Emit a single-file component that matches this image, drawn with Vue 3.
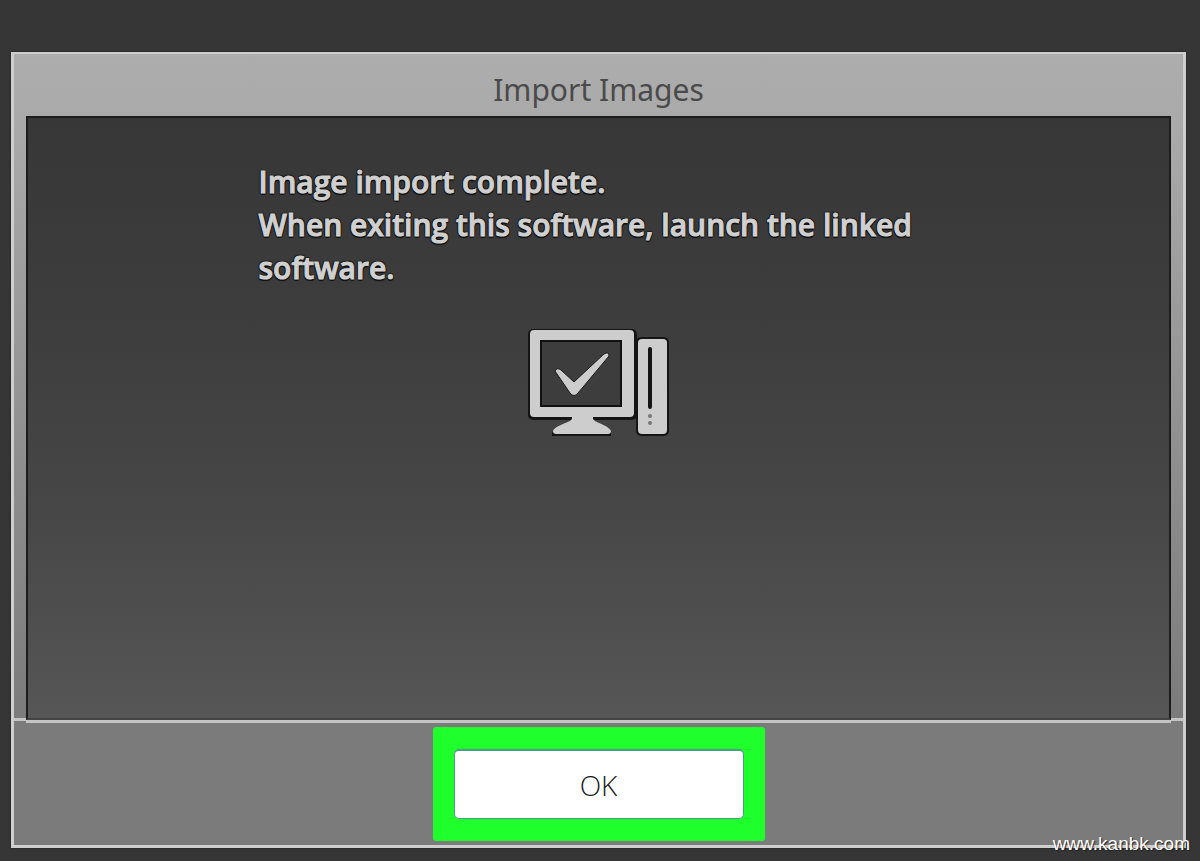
<script setup>
const title = 'Import Images'
const message = [
  'Image import complete.',
  'When exiting this software, launch the linked software.',
]
</script>

<template>
  <div class="screen">
    <section class="dialog" role="dialog" aria-labelledby="dialog-title">
      <header class="titlebar">
        <h1 id="dialog-title">{{ title }}</h1>
      </header>
      <main class="panel">
        <div class="message">
          <p v-for="line in message" :key="line">{{ line }}</p>
        </div>
        <svg class="computer" viewBox="0 0 144 112" width="144" height="112" aria-hidden="true">
          <g class="shade">
            <rect x="1" y="2" width="109" height="91" rx="5" />
            <path d="M44 90v4c-3 5-17 6-19 12v3h59v-3c-2-6-14-7-18-12v-4z" />
            <rect x="109" y="10" width="33" height="99" rx="5" />
          </g>
          <g class="shape">
            <path fill-rule="evenodd" d="M7 3h96q4 0 4 4v79q0 4-4 4H7q-4 0-4-4V7q0-4 4-4zM13 13v67h82V13z" />
            <path d="M45 88v3c0 5-16 6-19 13q0 3 3 3h52q3 0 3-3c-3-7-18-8-18-13v-3z" />
            <rect x="111" y="12" width="29" height="95" rx="4" />
          </g>
          <path class="outline" d="M14 79V14h80v65z" />
          <path class="check" d="M28 44q2-4 6-1l13 12 30-28q5-3 5 2L51 66q-4 5-8 0z" />
          <path class="slot" d="M123 22v58" />
          <circle class="dot" cx="123" cy="89" r="2" />
          <circle class="dot" cx="123" cy="96" r="2" />
        </svg>
      </main>
      <footer class="footer">
        <div class="highlight">
          <button type="button" class="ok">OK</button>
        </div>
      </footer>
    </section>
    <span class="watermark">www.kanbk.com</span>
  </div>
</template>

<style>
body {
  margin: 0;
  background: #363636;
}
</style>

<style scoped>
.screen {
  position: relative;
  display: flex;
  box-sizing: border-box;
  min-height: 100vh;
  padding: 52px 14px 13px 11px;
  background: #363636;
  font-family: "Noto Sans", "Open Sans", sans-serif;
}

.dialog {
  flex: 1;
  display: flex;
  flex-direction: column;
  border: 3px solid #cecece;
  border-top-width: 2px;
  background: linear-gradient(#adadad 0, #a9a9a9 80px, #8f8f8f 400px, #7b7b7b 664px);
  box-shadow: 0 0 2px #1c1c1c;
}

.titlebar {
  display: flex;
  justify-content: center;
  align-items: flex-end;
  height: 62px;
}

h1 {
  margin: 0 0 6px;
  color: #4a4a4a;
  font-size: 30px;
  font-weight: 400;
  line-height: 40px;
}

.panel {
  position: relative;
  flex: 1;
  display: flex;
  flex-direction: column;
  align-items: center;
  gap: 38px;
  margin: 0 12px -2px;
  padding-top: 42px;
  border: 2px solid #1c1c1c;
  border-bottom-color: #444;
  background: linear-gradient(#373737, #3d3d3d 33%, #474747 66%, #565656);
  box-shadow: 0 3px 0 #c4c4c4;
}

.message {
  width: 680px;
  color: #d0d0d0;
  font-family: "Open Sans", "Noto Sans", sans-serif;
  font-size: 30px;
  font-weight: 600;
  line-height: 43px;
  -webkit-text-stroke: 1px #d0d0d0;
  text-shadow: 1px 1px 1px #111, -1px -1px 1px #111, 1px -1px 1px #111, -1px 1px 1px #111, 0 2px 1px #111;
}

.message p {
  margin: 0;
}

.computer {
  display: block;
}

.shade {
  fill: #151515;
}

.shape {
  fill: #cdcdcd;
}

.outline {
  fill: #3d3d3d;
  stroke: #111;
  stroke-width: 2;
}

.check {
  fill: #cdcdcd;
  stroke: #1c1c1c;
  stroke-width: 1;
}

.slot {
  stroke: #151515;
  stroke-width: 4;
  stroke-linecap: round;
}

.dot {
  fill: #777;
}

.footer {
  display: flex;
  justify-content: center;
  padding: 6px 0 4px;
  border-top: 3px solid #c4c4c4;
  background: #7b7b7b;
}

.highlight {
  position: relative;
  padding: 22px 21px;
  border-radius: 3px;
  background: #1fff2c;
}

.ok {
  display: block;
  width: 290px;
  height: 70px;
  padding: 0;
  border: 1px solid #4b9c88;
  border-top-width: 2px;
  border-radius: 5px;
  background: #fff;
  color: #1a1a1a;
  font-family: "Open Sans", "Noto Sans", sans-serif;
  font-size: 28px;
  font-weight: 300;
  line-height: 40px;
}

.watermark {
  position: absolute;
  right: 10px;
  bottom: 6px;
  color: #fff;
  font-family: "Liberation Sans", sans-serif;
  font-size: 19px;
  line-height: 22px;
  text-shadow: 1px 1px 1px #222;
}
</style>
